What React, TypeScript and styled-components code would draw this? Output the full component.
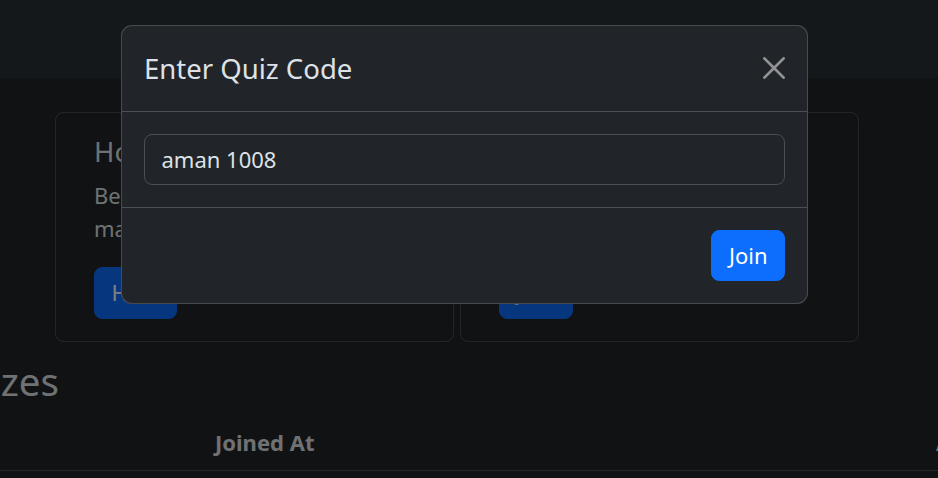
import React from "react";
import styled, { createGlobalStyle } from "styled-components";

const GlobalStyle = createGlobalStyle`
  html, body {
    margin: 0;
    padding: 0;
    background: #212529;
    overflow: hidden;
  }
  body {
    font-family: "Noto Sans", "Open Sans", sans-serif;
    color: #dee2e6;
    font-size: 22px;
    line-height: 1.5;
  }
  * { box-sizing: border-box; }
`;

const Page = styled.div`
  position: relative;
  width: 938px;
  height: 478px;
  overflow: hidden;
  background: #212529;
`;

const Navbar = styled.header`
  height: 78px;
  background: #2b3035;
`;

const Main = styled.main`
  padding-top: 34px;
  display: flex;
  flex-direction: column;
`;

const CardRow = styled.div`
  display: flex;
  gap: 6px;
  margin-left: 55px;
`;

const Card = styled.section`
  width: 399px;
  border: 1px solid rgba(255, 255, 255, 0.175);
  border-radius: 8.25px;
  padding: 22px 38px;
  display: flex;
  flex-direction: column;
  align-items: flex-start;
`;

const CardTitle = styled.h5`
  margin: 0 0 11px;
  font-size: 27.5px;
  font-weight: 400;
  line-height: 1.2;
`;

const CardText = styled.p`
  margin: 0 0 22px;
  max-width: 290px;
  font-size: 22px;
  line-height: 1.5;
`;

const Button = styled.button`
  font-family: inherit;
  font-size: 22px;
  line-height: 1.5;
  padding: 8.25px 16.5px;
  color: #fff;
  background: #0d6efd;
  border: 1px solid #0d6efd;
  border-radius: 8.25px;
  cursor: pointer;
`;

const SectionHead = styled.div`
  width: 59px;
  margin-top: 16px;
  display: flex;
  justify-content: flex-end;
`;

const SectionTitle = styled.h3`
  margin: 0 0 11px;
  font-size: 38.5px;
  font-weight: 400;
  line-height: 1.2;
  white-space: nowrap;
  flex-shrink: 0;
`;

const TableHead = styled.div`
  display: grid;
  grid-template-columns: 204px 721px 1fr;
  border-bottom: 1px solid #495057;
`;

const HeadCell = styled.div`
  padding: 11px;
  font-weight: 700;
  font-size: 22px;
  line-height: 1.5;
  white-space: nowrap;
`;

const Backdrop = styled.div`
  position: absolute;
  inset: 0;
  background: rgba(0, 0, 0, 0.5);
`;

const Modal = styled.div`
  position: absolute;
  top: 25px;
  left: 121px;
  width: 687px;
  background: #212529;
  border: 1px solid rgba(255, 255, 255, 0.175);
  border-radius: 11px;
  display: flex;
  flex-direction: column;
`;

const ModalHeader = styled.div`
  display: flex;
  align-items: center;
  justify-content: space-between;
  padding: 21.5px 22px 22px;
  border-bottom: 1px solid #495057;
`;

const ModalTitle = styled.h5`
  margin: 0;
  font-size: 27.5px;
  font-weight: 400;
  line-height: 1.5;
  color: #dee2e6;
`;

const CloseButton = styled.button`
  width: 22px;
  height: 22px;
  padding: 0;
  border: 0;
  background: transparent;
  display: flex;
  cursor: pointer;
  opacity: 0.5;
`;

const ModalBody = styled.div`
  padding: 22px;
`;

const Input = styled.input`
  display: block;
  width: 100%;
  font-family: inherit;
  font-size: 22px;
  line-height: 1.5;
  padding: 8px 16.5px;
  color: #dee2e6;
  background: #212529;
  border: 1px solid #495057;
  border-radius: 8.25px;
  outline: none;
`;

const ModalFooter = styled.div`
  display: flex;
  justify-content: flex-end;
  padding: 16.5px;
  border-top: 1px solid #495057;
`;

const FooterButton = styled(Button)`
  margin: 5.5px;
`;

const CloseIcon = () => (
  <svg width="22" height="22" viewBox="0 0 16 16" fill="#fff">
    <path d="M.293.293a1 1 0 0 1 1.414 0L8 6.586 14.293.293a1 1 0 1 1 1.414 1.414L9.414 8l6.293 6.293a1 1 0 0 1-1.414 1.414L8 9.414l-6.293 6.293a1 1 0 0 1-1.414-1.414L6.586 8 .293 1.707a1 1 0 0 1 0-1.414z" />
  </svg>
);

export default function App() {
  return (
    <>
      <GlobalStyle />
      <Page>
        <Navbar />
        <Main>
          <CardRow>
            <Card>
              <CardTitle>Host a Quiz</CardTitle>
              <CardText>Be a host, create quizzes, manage them and share.</CardText>
              <Button>Host</Button>
            </Card>
            <Card>
              <CardTitle>Join a Quiz</CardTitle>
              <CardText>Got a code from a host? Enter it to join the quiz.</CardText>
              <Button>Join</Button>
            </Card>
          </CardRow>
          <SectionHead>
            <SectionTitle>Joined Quizzes</SectionTitle>
          </SectionHead>
          <TableHead>
            <HeadCell />
            <HeadCell>Joined At</HeadCell>
            <HeadCell>Actions</HeadCell>
          </TableHead>
        </Main>
        <Backdrop />
        <Modal>
          <ModalHeader>
            <ModalTitle>Enter Quiz Code</ModalTitle>
            <CloseButton aria-label="Close">
              <CloseIcon />
            </CloseButton>
          </ModalHeader>
          <ModalBody>
            <Input defaultValue="aman 1008" />
          </ModalBody>
          <ModalFooter>
            <FooterButton>Join</FooterButton>
          </ModalFooter>
        </Modal>
      </Page>
    </>
  );
}
